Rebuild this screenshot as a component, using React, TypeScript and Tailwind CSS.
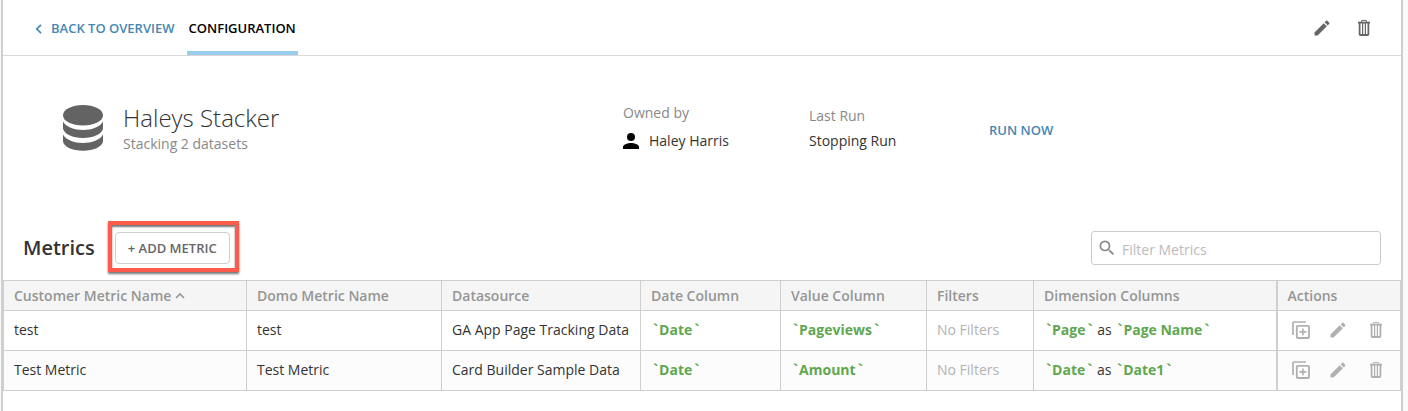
import { useState } from "react";

type IconProps = { className?: string };

const PencilIcon = ({ className }: IconProps) => (
  <svg viewBox="0 0 24 24" fill="currentColor" className={className} aria-hidden="true">
    <path d="M3 17.25V21h3.75L17.81 9.94l-3.75-3.75L3 17.25zM20.71 7.04a1 1 0 0 0 0-1.41l-2.34-2.34a1 1 0 0 0-1.41 0l-1.83 1.83 3.75 3.75 1.83-1.83z" />
  </svg>
);

const TrashIcon = ({ className }: IconProps) => (
  <svg viewBox="0 0 20 20" fill="none" stroke="currentColor" className={className} aria-hidden="true">
    <path d="M4 4.6h12" strokeWidth="1.8" />
    <path d="M7.5 4V3q0-.6.6-.6h3.800q.6 0 .6.6v1" strokeWidth="1" />
    <path d="M5.600 5v11.200q0 .8.8.8h7.200q.8 0 .8-.8V5" strokeWidth="1.800" />
    <path d="M8.600 5v12M11.400 5v12" strokeWidth="1.200" />
  </svg>
);

const DuplicateIcon = ({ className }: IconProps) => (
  <svg viewBox="0 0 18 18" fill="none" stroke="currentColor" className={className} aria-hidden="true">
    <path d="M1 14V2q0-1 1-1h12" strokeWidth="1.700" />
    <rect x="4.800" y="4.800" width="12.200" height="12.200" rx="1" strokeWidth="1.800" />
    <path d="M10.900 7.500v6.800M7.500 10.900h6.800" strokeWidth="1.600" />
  </svg>
);

const DatabaseIcon = ({ className }: IconProps) => (
  <svg viewBox="0 0 40 46" fill="currentColor" className={className} aria-hidden="true">
    <ellipse cx="20" cy="10.2" rx="20" ry="10.2" />
    <path d="M0 16.5C3 22 11 25 20 25s17-3 20-8.500V23.500C39 29 30.500 33 20 33S1 29 0 23.500z" />
    <path d="M0 29.500C3 35 11 38 20 38s17-3 20-8.500V36.500C39 42 30.500 45.700 20 45.700S1 42 0 36.500z" />
  </svg>
);

const PersonIcon = ({ className }: IconProps) => (
  <svg viewBox="0 0 16 16" fill="currentColor" className={className} aria-hidden="true">
    <circle cx="8" cy="4" r="4" />
    <path d="M0 16v-2c0-2.700 5.300-4 8-4s8 1.300 8 4v2z" />
  </svg>
);

const SearchIcon = ({ className }: IconProps) => (
  <svg viewBox="0 0 24 24" fill="currentColor" className={className} aria-hidden="true">
    <path d="M15.500 14h-.79l-.28-.27A6.471 6.471 0 0 0 16 9.500 6.500 6.500 0 1 0 9.500 16c1.610 0 3.090-.59 4.230-1.570l.27.28v.79l5 4.990L20.490 19l-4.990-5zm-6 0C7.010 14 5 11.990 5 9.500S7.010 5 9.500 5 14 7.010 14 9.500 11.990 14 9.500 14z" />
  </svg>
);

const Tick = () => <span className="pr-px pl-0.5">`</span>;

const Field = ({ name }: { name: string }) => (
  <b className="font-bold text-[#5fa750]">
    <Tick />
    {name}
    <Tick />
  </b>
);

type Metric = {
  custom: string;
  domo: string;
  source: string;
  date: string;
  value: string;
  dimension: [string, string];
};

const metrics: Metric[] = [
  { custom: "test", domo: "test", source: "GA App Page Tracking Data", date: "Date", value: "Pageviews", dimension: ["Page", "Page Name"] },
  { custom: "Test Metric", domo: "Test Metric", source: "Card Builder Sample Data", date: "Date", value: "Amount", dimension: ["Date", "Date1"] },
];

const th = "h-[30px] border border-[#cfcfcf] px-[10px] text-left font-semibold";
const td = "h-10 border border-[#cfcfcf] px-[10px] pb-0.5";

export default function App() {
  const [filter, setFilter] = useState("");
  const rows = metrics.filter((m) => Object.values(m).join(" ").toLowerCase().includes(filter.toLowerCase()));

  return (
    <div className="flex min-h-screen bg-[#fafafa] pr-[5px] pl-px font-['Open_Sans',sans-serif] text-sm text-[#333]">
      <main className="min-w-0 flex-1 border-x-2 border-[#cfcfcf] bg-white">
        <header className="flex h-14 items-stretch border-b border-[#d8d8d8] pr-[27px] pl-8">
          <nav className="flex flex-1 gap-3 text-[13px] font-semibold">
            <a href="#overview" className="flex items-center gap-2 pt-0.5 text-[#4488b0]">
              <svg viewBox="0 0 8 10" className="h-[10px] w-2" fill="none" stroke="currentColor" strokeWidth="1.7" aria-hidden="true">
                <path d="M6 .8 1.800 5 6 9.200" />
              </svg>
              BACK TO OVERVIEW
            </a>
            <a href="#configuration" aria-current="page" className="flex items-center border-b-4 border-[#99ccea] px-0.5 pt-1.5 text-black">
              CONFIGURATION
            </a>
          </nav>
          <div className="flex items-center gap-[22px] text-[#666]">
            <button aria-label="Edit"><PencilIcon className="size-5" /></button>
            <button aria-label="Delete"><TrashIcon className="size-5" /></button>
          </div>
        </header>

        <section className="flex h-[148px] items-center px-[60px]">
          <div className="flex w-[560px] items-center gap-5 pb-1">
            <DatabaseIcon className="h-[46px] w-10 text-[#636363]" />
            <div>
              <h1 className="text-2xl leading-8 font-light">Haleys Stacker</h1>
              <p className="leading-5 text-[#888]">Stacking 2 datasets</p>
            </div>
          </div>
          <div className="w-[186px] pb-1.5">
            <p className="leading-5 text-[#888]">Owned by</p>
            <p className="mt-2 flex items-center gap-[10px] leading-5">
              <PersonIcon className="size-4 text-black" />
              Haley Harris
            </p>
          </div>
          <div className="w-[180px] pb-1">
            <p className="leading-5 text-[#888]">Last Run</p>
            <p className="mt-[5px] leading-5">Stopping Run</p>
          </div>
          <button className="text-[13px] font-semibold text-[#4488b0]">RUN NOW</button>
        </section>

        <section>
          <div className="flex h-[76px] items-center pt-3 pr-5 pl-5">
            <h2 className="text-[20px] font-semibold">Metrics</h2>
            <div className="relative ml-5">
              <button className="block h-8 rounded-sm border border-[#cfcfcf] bg-white px-3 text-[13px] font-semibold text-[#666]">
                + ADD METRIC
              </button>
              <div className="pointer-events-none absolute -top-[11px] -right-[9px] -bottom-2 -left-[7px] border-4 border-[#ff5a4a] shadow-[0_2px_2px_#777,inset_0_2px_2px_#777]" />
            </div>
            <div className="ml-auto flex h-[34px] w-[290px] items-center gap-[5px] rounded-[3px] border border-[#cbcbcb] px-[5px] text-[#888]">
              <SearchIcon className="size-5" />
              <input
                aria-label="Filter Metrics"
                value={filter}
                onChange={(e) => setFilter(e.target.value)}
                placeholder="Filter Metrics"
                className="h-6 min-w-0 flex-1 pt-0.5 text-[#333] outline-none placeholder:text-[#bbb]"
              />
            </div>
          </div>

          <table className="w-full table-fixed border-collapse whitespace-nowrap">
            <colgroup>
              <col className="w-[243px]" />
              <col className="w-[195px]" />
              <col className="w-[199px]" />
              <col className="w-[140px]" />
              <col className="w-[146px]" />
              <col className="w-[107px]" />
              <col />
              <col className="w-[124px]" />
            </colgroup>
            <thead className="bg-[#f5f5f5] text-[#959595]">
              <tr>
                <th className={th}>
                  <button className="flex items-center gap-1">
                    Customer Metric Name
                    <svg viewBox="0 0 10 8" className="h-2 w-[10px]" fill="none" stroke="currentColor" strokeWidth="1.6" aria-hidden="true">
                      <path d="M1 6 5 2l4 4" />
                    </svg>
                  </button>
                </th>
                <th className={th}>Domo Metric Name</th>
                <th className={th}>Datasource</th>
                <th className={th}>Date Column</th>
                <th className={th}>Value Column</th>
                <th className={th}>Filters</th>
                <th className={th}>Dimension Columns</th>
                <th className="border border-l-2 border-[#cfcfcf] px-[10px] text-left font-semibold">Actions</th>
              </tr>
            </thead>
            <tbody>
              {rows.map((m) => (
                <tr key={m.custom} className="even:bg-[#fcfcfc]">
                  <td className={td}>{m.custom}</td>
                  <td className={td}>{m.domo}</td>
                  <td className={td}>{m.source}</td>
                  <td className={td}><Field name={m.date} /></td>
                  <td className={td}><Field name={m.value} /></td>
                  <td className="border border-[#cfcfcf] px-[10px] pb-0.5 text-[#b3b3b3]">No Filters</td>
                  <td className={td}>
                    <Field name={m.dimension[0]} /> as <Field name={m.dimension[1]} />
                  </td>
                  <td className="border border-l-2 border-[#cfcfcf] px-[14px] pb-0.5 text-[#b0b0b0]">
                    <div className="flex items-center justify-between">
                      <button aria-label={`Duplicate ${m.custom}`}><DuplicateIcon className="size-[18px]" /></button>
                      <button aria-label={`Edit ${m.custom}`}><PencilIcon className="size-5" /></button>
                      <button aria-label={`Delete ${m.custom}`}><TrashIcon className="size-5" /></button>
                    </div>
                  </td>
                </tr>
              ))}
            </tbody>
          </table>
        </section>
      </main>
    </div>
  );
}
